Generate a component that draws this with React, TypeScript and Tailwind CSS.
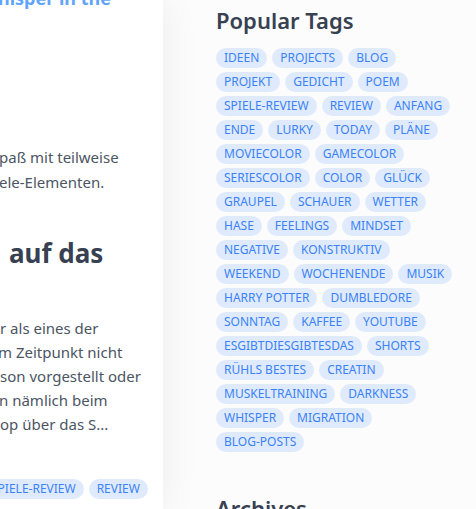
import React from 'react';

const popularTags = [
  'ideen', 'projects', 'blog', 'projekt', 'gedicht', 'poem', 'spiele-review', 'review',
  'anfang', 'ende', 'lurky', 'today', 'pläne', 'moviecolor', 'gamecolor', 'seriescolor',
  'color', 'glück', 'graupel', 'schauer', 'wetter', 'hase', 'feelings', 'mindset',
  'negative', 'konstruktiv', 'weekend', 'wochenende', 'musik', 'harry potter', 'dumbledore',
  'sonntag', 'kaffee', 'youtube', 'esgibtdiesgibtesdas', 'shorts', 'rühls bestes', 'creatin',
  'muskeltraining', 'darkness', 'whisper', 'migration', 'blog-posts',
];

const Tag: React.FC<{ name: string }> = ({ name }) => (
  <a
    href="#"
    className="inline-flex h-5 items-center whitespace-nowrap rounded-full bg-[#dfebfd] px-2 text-xs uppercase leading-4 text-[#3b82f6]"
  >
    {name}
  </a>
);

const App: React.FC = () => {
  return (
    <div className="flex h-[509px] w-[476px] overflow-hidden bg-[#fcfcfc] font-['Noto_Sans',sans-serif]">
      {/* post list, scrolled and cut at the left edge */}
      <main className="relative z-10 w-[163px] shrink-0 overflow-hidden bg-white shadow-[0_0_36px_rgba(0,0,0,0.07)]">
        <h2 className="-mt-[16px] whitespace-nowrap text-[18px] leading-7 font-bold text-[#60a5fa]">
          <span className="-ml-[2px] inline-block">hisper in the</span>
        </h2>

        <div className="mt-[133px] text-[15px] leading-[25px] text-[#4b5563]">
          <div className="-ml-[1px] whitespace-nowrap">paß mit teilweise</div>
          <div className="-ml-[1px] whitespace-nowrap">ele-Elementen.</div>
        </div>

        <h2 className="mt-[40px] whitespace-nowrap pl-[9px] text-[26px] leading-9 font-bold text-[#374151]">
          auf das
        </h2>

        <div className="mt-[45px] text-[15px] leading-6 text-[#4b5563]">
          <div className="whitespace-nowrap">r als eines der</div>
          <div className="-ml-[2px] whitespace-nowrap">m Zeitpunkt nicht</div>
          <div className="whitespace-nowrap">son vorgestellt oder</div>
          <div className="-ml-[1px] whitespace-nowrap">n nämlich beim</div>
          <div className="whitespace-nowrap">op über das S...</div>
        </div>

        <div className="mt-[43px] -ml-[17px] flex gap-[5px]">
          <Tag name="spiele-review" />
          <Tag name="review" />
        </div>
      </main>

      {/* sidebar */}
      <aside className="ml-[53px] w-[244px] shrink-0 pt-[4px]">
        <h3 className="text-[22px] leading-8 font-semibold text-[#374151]">Popular Tags</h3>
        <div className="mt-[12px] flex flex-wrap gap-x-[5px] gap-y-1">
          {popularTags.map((t) => (
            <Tag key={t} name={t} />
          ))}
        </div>
        <h3 className="mt-[40px] text-[22px] leading-8 font-semibold text-[#374151]">Archives</h3>
      </aside>
    </div>
  );
};

export default App;
